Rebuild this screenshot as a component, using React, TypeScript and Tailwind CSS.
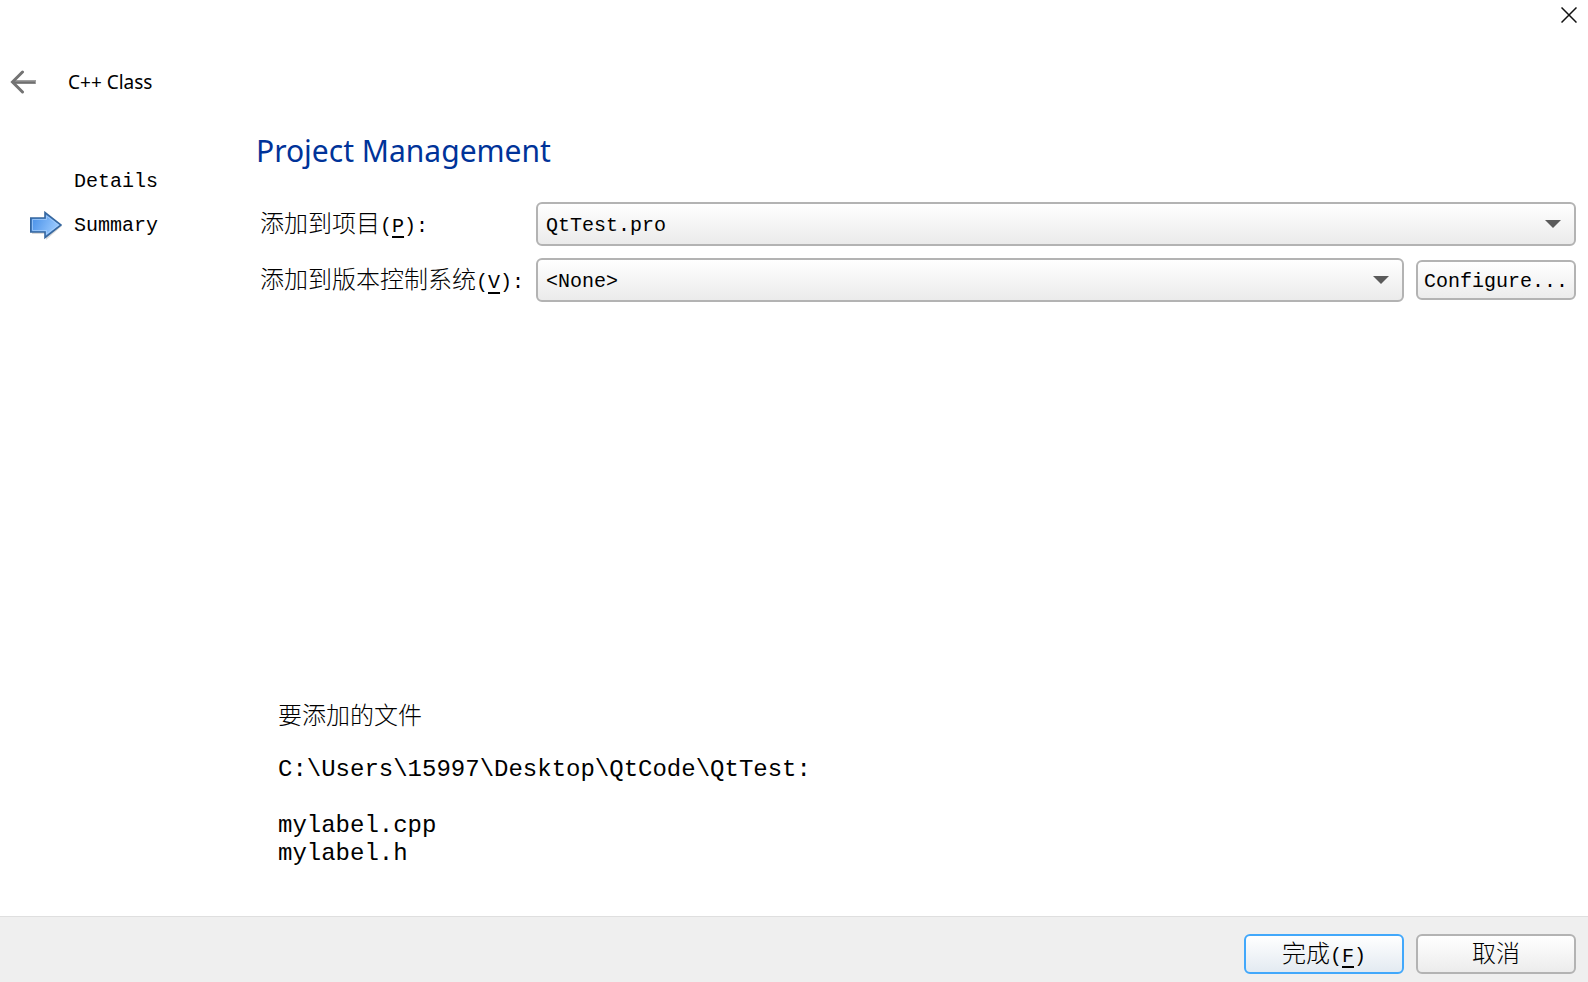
import { useState } from "react";
import type { ReactNode, SelectHTMLAttributes, ButtonHTMLAttributes } from "react";
import clsx from "clsx";

const projects = ["QtTest.pro"];
const versionControls = ["<None>"];
const files = ["mylabel.cpp", "mylabel.h"];

function CloseIcon() {
  return (
    <svg width="16" height="16" viewBox="0 0 16 16" fill="none" stroke="#111" strokeWidth="1.5">
      <path d="M0.5 0.5 15.5 15.5M15.5 0.5 0.5 15.5" />
    </svg>
  );
}

function BackIcon() {
  return (
    <svg width="26" height="24" viewBox="0 0 26 24" fill="none">
      <path d="M3 12H26" stroke="#a0a0a0" strokeWidth="4" />
      <path d="M2 12.500H25" stroke="#6f6f6f" strokeWidth="2" />
      <path d="M12.500 2 2.500 12 12.500 22" stroke="#737373" strokeWidth="3" strokeLinecap="round" />
    </svg>
  );
}

function StepArrow() {
  return (
    <svg width="34" height="30" viewBox="0 0 34 30">
      <defs>
        <linearGradient id="step-fill" x1="0" y1="0" x2="1" y2="0.4">
          <stop offset="0" stopColor="#3f8ae6" />
          <stop offset="1" stopColor="#9ccbff" />
        </linearGradient>
      </defs>
      <path d="M2 10H16V4L32 15 16 29V23H2Z" fill="#000" opacity="0.15" />
      <path d="M0.800 7H15V1.500L31 14 15 26.500V21H0.800Z" fill="url(#step-fill)" stroke="#36679f" strokeWidth="1.600" />
      <path d="M2.500 8.500H16.500V5L28.500 14 16.500 23V19.500H2.500Z" fill="none" stroke="#a9d0fb" strokeWidth="1" opacity="0.7" />
    </svg>
  );
}

// Latin text inside a CJK label, half the width of a full glyph
function Accelerator({ letter, children }: { letter: string; children?: ReactNode }) {
  return (
    <span className="text-xl">
      (<span className="underline decoration-2 underline-offset-4">{letter}</span>){children}
    </span>
  );
}

function ComboBox({ className, children, ...props }: SelectHTMLAttributes<HTMLSelectElement>) {
  return (
    <div className={clsx("relative min-w-0 flex-1", className)}>
      <select
        className="block h-11 w-full appearance-none rounded-md border-2 border-[#b3b3b3] bg-linear-to-b from-white to-[#ebebeb] pt-1 pr-12 pl-2 text-xl text-black focus:outline-none"
        {...props}
      >
        {children}
      </select>
      <svg
        className="pointer-events-none absolute top-4 right-[15px] h-3 w-4"
        viewBox="0 0 16 12"
        fill="#5a5a5a"
      >
        <path d="M0 2H16L8 10Z" />
      </svg>
    </div>
  );
}

function PushButton({ primary, ...props }: ButtonHTMLAttributes<HTMLButtonElement> & { primary?: boolean }) {
  return (
    <button
      type="button"
      className={clsx(
        "flex h-10 w-40 shrink-0 items-center justify-center rounded-md border-2 bg-linear-to-b from-white pt-1 whitespace-nowrap",
        primary ? "border-[#42a8fb] to-[#e3eaf1]" : "border-[#b3b3b3] to-[#ececec]"
      )}
      {...props}
    />
  );
}

function App() {
  const [project, setProject] = useState(projects[0]);
  const [vcs, setVcs] = useState(versionControls[0]);

  return (
    <div className="flex min-h-screen flex-col bg-white font-['Liberation_Mono','Noto_Sans_CJK_SC',monospace] text-2xl leading-7 font-light text-black">
      <div className="flex h-13 items-start justify-end px-[11px] pt-[7px]">
        <button type="button" aria-label="Close" className="flex">
          <CloseIcon />
        </button>
      </div>

      <header className="flex h-15 items-center gap-8 px-2.5">
        <button type="button" aria-label="Back" className="flex">
          <BackIcon />
        </button>
        <h1 className="font-['Noto_Sans','Noto_Sans_CJK_SC',sans-serif] text-[19px] font-normal">C++ Class</h1>
      </header>

      <div className="flex flex-1 pt-[19px] pr-3">
        <nav className="w-64 shrink-0 pt-[29px] text-xl">
          <ol>
            <li className="flex h-11 items-center pl-[74px]">Details</li>
            <li className="flex h-11 items-center gap-2.5 pl-[30px]" aria-current="step">
              <StepArrow />
              Summary
            </li>
          </ol>
        </nav>

        <main className="flex min-w-0 flex-1 flex-col">
          <h2 className="font-['Noto_Sans','Noto_Sans_CJK_SC',sans-serif] text-3xl leading-10 font-normal text-[#003399]">
            Project Management
          </h2>

          <form className="mt-[31px] grid grid-cols-[264px_1fr] items-center gap-x-4 gap-y-3">
            <label htmlFor="project" className="pt-1 pl-1 whitespace-nowrap">
              添加到项目<Accelerator letter="P">:</Accelerator>
            </label>
            <div className="flex">
              <ComboBox id="project" value={project} onChange={(e) => setProject(e.target.value)}>
                {projects.map((name) => (
                  <option key={name}>{name}</option>
                ))}
              </ComboBox>
            </div>

            <label htmlFor="vcs" className="pt-1 pl-1 whitespace-nowrap">
              添加到版本控制系统<Accelerator letter="V">:</Accelerator>
            </label>
            <div className="flex items-center gap-3">
              <ComboBox id="vcs" value={vcs} onChange={(e) => setVcs(e.target.value)}>
                {versionControls.map((name) => (
                  <option key={name}>{name}</option>
                ))}
              </ComboBox>
              <PushButton>
                <span className="text-xl">Configure...</span>
              </PushButton>
            </div>
          </form>

          <section className="mt-auto pb-12 pl-[22px]">
            <h3 className="font-light">要添加的文件</h3>
            <p className="mt-6">C:\Users\15997\Desktop\QtCode\QtTest:</p>
            <ul className="mt-7">
              {files.map((file) => (
                <li key={file}>{file}</li>
              ))}
            </ul>
          </section>
        </main>
      </div>

      <footer className="flex justify-end gap-3 border-t border-[#dfdfdf] bg-[#efefef] px-3 pt-[17px] pb-2">
        <PushButton primary>
          <span>
            完成<Accelerator letter="F" />
          </span>
        </PushButton>
        <PushButton>取消</PushButton>
      </footer>
    </div>
  );
}

export default App;
